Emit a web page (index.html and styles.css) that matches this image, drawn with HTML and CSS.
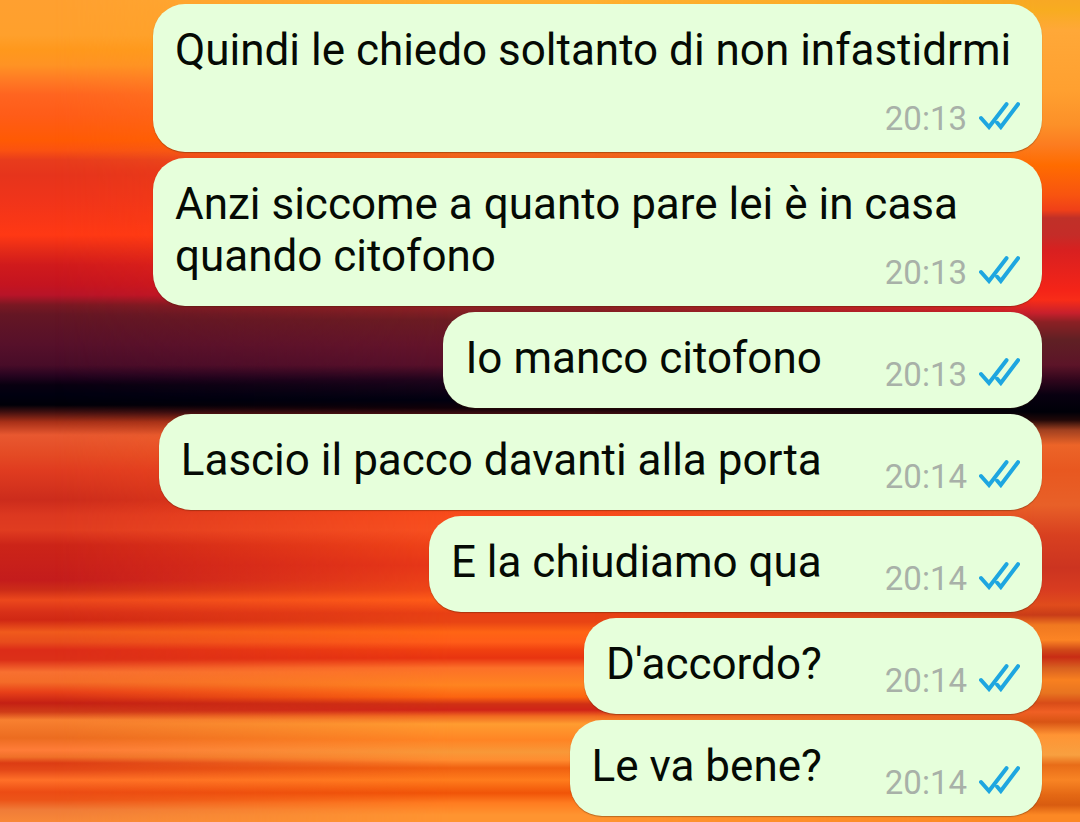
FILE: index.html
```html
<!DOCTYPE html>
<html lang="it">
<head>
    <meta charset="UTF-8">
    <meta name="viewport" content="width=device-width, initial-scale=1.0">
    <title>Chat</title>
    <link rel="stylesheet" href="styles.css">
</head>
<body>
    <svg class="sprite" aria-hidden="true">
        <symbol id="read" viewBox="0 0 41 28">
            <path d="M2 16 L10 25 L27.5 2.2 M18.2 20.8 L21.8 25 L39 2.2"/>
        </symbol>
    </svg>

    <main class="chat">
        <div class="wallpaper wallpaper-middle"></div>
        <div class="wallpaper wallpaper-right"></div>

        <p class="bubble">Quindi le chiedo soltanto di non infastidrmi<span class="meta"><time>20:13</time><svg class="ticks"><use href="#read"/></svg></span></p>
        <p class="bubble">Anzi siccome a quanto pare lei è in casa quando citofono<span class="meta"><time>20:13</time><svg class="ticks"><use href="#read"/></svg></span></p>
        <p class="bubble">Io manco citofono<span class="meta"><time>20:13</time><svg class="ticks"><use href="#read"/></svg></span></p>
        <p class="bubble">Lascio il pacco davanti alla porta<span class="meta"><time>20:14</time><svg class="ticks"><use href="#read"/></svg></span></p>
        <p class="bubble">E la chiudiamo qua<span class="meta"><time>20:14</time><svg class="ticks"><use href="#read"/></svg></span></p>
        <p class="bubble">D'accordo?<span class="meta"><time>20:14</time><svg class="ticks"><use href="#read"/></svg></span></p>
        <p class="bubble">Le va bene?<span class="meta"><time>20:14</time><svg class="ticks"><use href="#read"/></svg></span></p>
    </main>
</body>
</html>
```

FILE: styles.css
```css
* {
    box-sizing: border-box;
}
body {
    margin: 0;
    font-family: Roboto, sans-serif;
    color: #050a04;
}
.sprite {
    display: none;
}
.chat {
    position: relative;
    z-index: 0;
    display: flex;
    flex-direction: column;
    align-items: flex-end;
    gap: 6px;
    min-height: 100vh;
    padding: 4px 38px 4px 153px;
    background: linear-gradient(
        #ffa030 0, #ffa02c 35px, #ff981c 50px, #ff9324 65px, #ff7a24 80px,
        #ff6420 95px, #ff5c18 115px, #ff5a04 140px, #fb5210 150px, #e83c1c 160px,
        #e6341c 175px, #f0341a 200px, #ff3814 235px, #e42a18 250px, #d01a1c 265px,
        #c41420 285px, #b81428 295px, #7a1822 305px, #641624 315px, #56102a 345px,
        #480c28 365px, #280420 375px, #080010 385px, #000010 395px, #000008 405px,
        #401010 412px, #a83018 422px, #e85830 435px, #e44a24 455px, #e03c20 470px,
        #cc2c1c 500px, #dc3820 515px, #e03c20 530px, #cc2418 545px, #c41c1c 580px,
        #cc2c18 590px, #ec481c 600px, #d83018 612px, #d02814 620px, #f05a1c 632px,
        #e84c1c 642px, #dc2c18 650px, #dc3018 660px, #f87030 672px, #f46c28 682px,
        #e84018 692px, #c42014 703px, #d03c18 712px, #f88030 720px, #ec6c20 738px,
        #ff7c38 750px, #f07028 757px, #dc3c14 763px, #e44818 770px, #ff7028 780px,
        #ec4c14 792px, #ec5418 800px, #f07c38 810px, #f88838 822px);
}

/* sunset bands change colour from left to right, so two more layers fade in */
.wallpaper {
    position: absolute;
    inset: 0;
    z-index: -1;
}
.wallpaper-middle {
    background: linear-gradient(
        #ffb030 0, #ffa020 50px, #ff8c20 80px, #ff6c08 140px, #f0641c 155px,
        #f04414 170px, #ff4010 235px, #f02c18 265px, #d41c1c 295px, #8c2024 308px,
        #6c1c22 320px, #64142a 345px, #58102a 365px, #20041c 380px, #000010 400px,
        #100008 408px, #380c10 413px, #a83818 422px, #f46424 438px, #f04c1c 470px,
        #f04418 500px, #f84c1c 515px, #f85020 530px, #f04418 545px, #e83818 565px,
        #f04818 590px, #ff5c18 600px, #e84014 613px, #e84414 622px, #ff6414 632px,
        #ff5c18 642px, #f04010 650px, #e83410 658px, #fc7028 668px, #ff8420 685px,
        #fc6410 697px, #d03014 704px, #d02418 710px, #f06820 716px, #ff9c30 724px,
        #ff8424 740px, #f89838 752px, #ff8c30 760px, #f06010 768px, #ff7c1c 780px,
        #f05408 793px, #ff7c20 803px, #ff9430 815px);
    -webkit-mask-image: linear-gradient(to right, transparent 5%, #000 42%);
    mask-image: linear-gradient(to right, transparent 5%, #000 42%);
}
.wallpaper-right {
    background: linear-gradient(
        #f8a824 0, #f8ac20 10px, #ffa838 30px, #ffa030 90px, #fc9028 125px,
        #fc7c20 145px, #ff6c00 165px, #f85410 195px, #f04018 210px, #c03028 218px,
        #c42c28 235px, #d82020 250px, #f42418 290px, #f82c18 300px, #c8202c 313px,
        #8c2024 322px, #602024 340px, #5c1428 365px, #30061c 380px, #080010 395px,
        #000008 412px, #200808 420px, #a04020 430px, #ec6428 445px, #e85820 470px,
        #e86028 505px, #d84020 535px, #cc3420 568px, #d83c20 590px, #e04c1c 605px,
        #c83c18 615px, #f07820 625px, #fc8424 640px, #d04818 650px, #c82c14 657px,
        #d86020 668px, #f88020 680px, #e87420 693px, #d84c18 703px, #f06024 712px,
        #d85414 722px, #ff9434 735px, #f8a040 755px, #e86c18 765px, #f88424 780px,
        #e46814 795px, #d85c10 805px, #fc8824 815px);
    -webkit-mask-image: linear-gradient(to right, transparent 55%, #000 96%);
    mask-image: linear-gradient(to right, transparent 55%, #000 96%);
}

.bubble {
    display: flow-root;
    margin: 0;
    padding: 20px 22px 14px 22px;
    border-radius: 32px;
    background: #e6ffdb;
    box-shadow: 0 1px 1px rgba(60, 30, 0, 0.35);
    font-size: 44px;
    line-height: 52px;
}

/* stays on the last line of text when there is room, else drops below it */
.meta {
    float: right;
    display: flex;
    align-items: center;
    gap: 12px;
    margin-left: 63px;
    padding-top: 23px;
    font-size: 33px;
    line-height: 39px;
    color: #a8b1a8;
}
.ticks {
    width: 41px;
    height: 28px;
    margin-bottom: 6px;
    fill: none;
    stroke: #1ea6e0;
    stroke-width: 4;
    stroke-linecap: round;
}
```
